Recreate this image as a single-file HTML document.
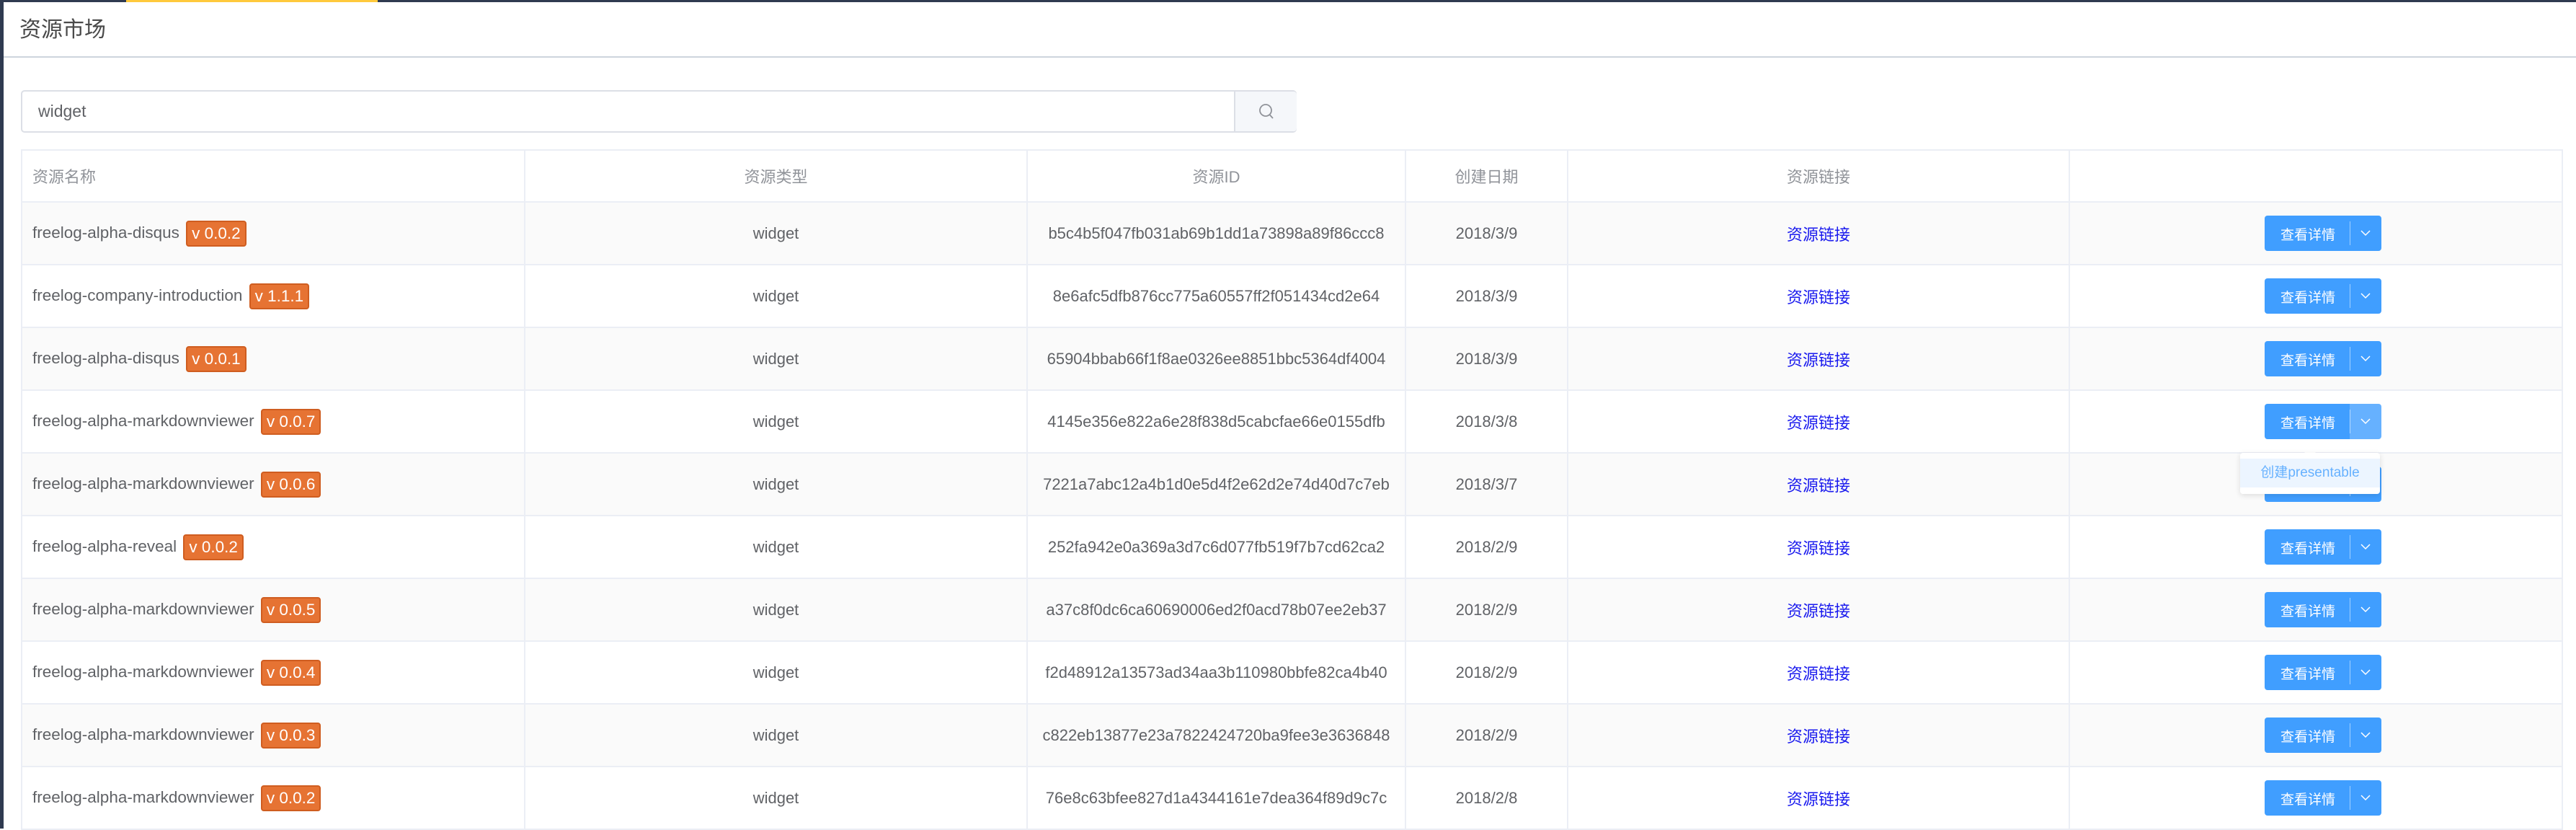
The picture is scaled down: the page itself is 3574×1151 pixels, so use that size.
<!DOCTYPE html>
<html><head><meta charset="utf-8"><style>
*{box-sizing:border-box;margin:0;padding:0}
body{width:3574px;height:1149px;overflow:hidden;background:#fff;font-family:"Liberation Sans","Noto Sans CJK SC",sans-serif;position:relative}
.left{position:absolute;left:0;top:0;width:5px;height:1149px;background:#2f3a50}
.top{position:absolute;left:0;top:0;width:3574px;height:3px;background:#2f3a50}
.yel{position:absolute;left:175px;top:0;width:349px;height:3px;background:#ffc93c}
.title{position:absolute;left:27px;top:22px;font-size:30px;color:#4a4a4a;line-height:40px}
.hline{position:absolute;left:5px;top:78px;width:3569px;height:2px;background:#cdd5dd}
.search{position:absolute;left:29px;top:125px;width:1770px;height:59px;border:2px solid #dcdfe6;border-radius:5px}
.search .txt{position:absolute;left:22px;top:14px;font-size:23px;color:#606266}
.search .btn{position:absolute;left:1681px;top:0;width:87px;height:55px;background:#f5f7fa;border-left:2px solid #dcdfe6;border-radius:0 4px 4px 0}
table{position:absolute;left:29px;top:207px;width:3527px;border-collapse:collapse;table-layout:fixed}
td,th{border:2px solid #ebeef5;font-size:22px;color:#606266;font-weight:normal;text-align:center;height:87px;white-space:nowrap}
th{height:72px;color:#909399}
td.n,th.n{text-align:left;padding-left:14px}
td.n{font-size:22.5px}
tr:nth-child(even) td{background:#fafafa}
.b{display:inline-block;background:#e67333;border:2px solid #cf5d20;color:#fff;border-radius:4px;padding:0 6px;height:36px;line-height:32px;margin-left:3px;vertical-align:middle}
a{color:#1a1aee;text-decoration:none}
.bt{display:inline-block;position:relative;left:10px;width:162px;height:49px;background:#409eff;border-radius:4px;vertical-align:middle;color:#fff;font-size:19px;text-align:left}
.bt span{position:absolute;left:22px;top:12px}
.bt i{position:absolute;left:118px;top:8px;width:1px;height:33px;background:rgba(255,255,255,.5)}
.bt svg{position:absolute;left:133px;top:19px}
.dd{position:absolute;left:3108px;top:628px;width:194px;height:57px;background:#fff;border-radius:4px;box-shadow:0 2px 8px rgba(0,0,0,.12)}
.dd div{position:absolute;left:0;top:8px;width:194px;height:40px;background:#ecf5ff;color:#66b1ff;font-size:19px;line-height:40px;text-align:center}
.arr{position:absolute;left:3197px;top:620px;width:0;height:0;border-left:8px solid transparent;border-right:8px solid transparent;border-bottom:8px solid #fff}
</style></head><body>
<div class="left"></div><div class="top"></div><div class="yel"></div>
<div class="title">资源市场</div>
<div class="hline"></div>
<div class="search"><span class="txt">widget</span><div class="btn"><svg width="87" height="55" viewBox="0 0 87 55"><circle cx="42" cy="26" r="8" fill="none" stroke="#909399" stroke-width="1.8"/><line x1="47.5" y1="32" x2="52" y2="37" stroke="#909399" stroke-width="1.8"/></svg></div></div>
<table>
<colgroup><col style="width:698px"><col style="width:697px"><col style="width:525px"><col style="width:225px"><col style="width:696px"><col></colgroup>
<tr><th class="n">资源名称</th><th>资源类型</th><th>资源ID</th><th>创建日期</th><th>资源链接</th><th></th></tr>
<tr><td class="n">freelog-alpha-disqus <span class="b">v 0.0.2</span></td><td>widget</td><td>b5c4b5f047fb031ab69b1dd1a73898a89f86ccc8</td><td>2018/3/9</td><td><a>资源链接</a></td><td><span class="bt"><span>查看详情</span><i></i><svg width="14" height="10"><path d="M1 2L7 8L13 2" fill="none" stroke="#fff" stroke-width="1.5"/></svg></span></td></tr>
<tr><td class="n">freelog-company-introduction <span class="b">v 1.1.1</span></td><td>widget</td><td>8e6afc5dfb876cc775a60557ff2f051434cd2e64</td><td>2018/3/9</td><td><a>资源链接</a></td><td><span class="bt"><span>查看详情</span><i></i><svg width="14" height="10"><path d="M1 2L7 8L13 2" fill="none" stroke="#fff" stroke-width="1.5"/></svg></span></td></tr>
<tr><td class="n">freelog-alpha-disqus <span class="b">v 0.0.1</span></td><td>widget</td><td>65904bbab66f1f8ae0326ee8851bbc5364df4004</td><td>2018/3/9</td><td><a>资源链接</a></td><td><span class="bt"><span>查看详情</span><i></i><svg width="14" height="10"><path d="M1 2L7 8L13 2" fill="none" stroke="#fff" stroke-width="1.5"/></svg></span></td></tr>
<tr><td class="n">freelog-alpha-markdownviewer <span class="b">v 0.0.7</span></td><td>widget</td><td>4145e356e822a6e28f838d5cabcfae66e0155dfb</td><td>2018/3/8</td><td><a>资源链接</a></td><td><span class="bt" style="background:linear-gradient(90deg,#409eff 118px,#66b1ff 118px)"><span>查看详情</span><i></i><svg width="14" height="10"><path d="M1 2L7 8L13 2" fill="none" stroke="#fff" stroke-width="1.5"/></svg></span></td></tr>
<tr><td class="n">freelog-alpha-markdownviewer <span class="b">v 0.0.6</span></td><td>widget</td><td>7221a7abc12a4b1d0e5d4f2e62d2e74d40d7c7eb</td><td>2018/3/7</td><td><a>资源链接</a></td><td><span class="bt"><span>查看详情</span><i></i><svg width="14" height="10"><path d="M1 2L7 8L13 2" fill="none" stroke="#fff" stroke-width="1.5"/></svg></span></td></tr>
<tr><td class="n">freelog-alpha-reveal <span class="b">v 0.0.2</span></td><td>widget</td><td>252fa942e0a369a3d7c6d077fb519f7b7cd62ca2</td><td>2018/2/9</td><td><a>资源链接</a></td><td><span class="bt"><span>查看详情</span><i></i><svg width="14" height="10"><path d="M1 2L7 8L13 2" fill="none" stroke="#fff" stroke-width="1.5"/></svg></span></td></tr>
<tr><td class="n">freelog-alpha-markdownviewer <span class="b">v 0.0.5</span></td><td>widget</td><td>a37c8f0dc6ca60690006ed2f0acd78b07ee2eb37</td><td>2018/2/9</td><td><a>资源链接</a></td><td><span class="bt"><span>查看详情</span><i></i><svg width="14" height="10"><path d="M1 2L7 8L13 2" fill="none" stroke="#fff" stroke-width="1.5"/></svg></span></td></tr>
<tr><td class="n">freelog-alpha-markdownviewer <span class="b">v 0.0.4</span></td><td>widget</td><td>f2d48912a13573ad34aa3b110980bbfe82ca4b40</td><td>2018/2/9</td><td><a>资源链接</a></td><td><span class="bt"><span>查看详情</span><i></i><svg width="14" height="10"><path d="M1 2L7 8L13 2" fill="none" stroke="#fff" stroke-width="1.5"/></svg></span></td></tr>
<tr><td class="n">freelog-alpha-markdownviewer <span class="b">v 0.0.3</span></td><td>widget</td><td>c822eb13877e23a7822424720ba9fee3e3636848</td><td>2018/2/9</td><td><a>资源链接</a></td><td><span class="bt"><span>查看详情</span><i></i><svg width="14" height="10"><path d="M1 2L7 8L13 2" fill="none" stroke="#fff" stroke-width="1.5"/></svg></span></td></tr>
<tr><td class="n">freelog-alpha-markdownviewer <span class="b">v 0.0.2</span></td><td>widget</td><td>76e8c63bfee827d1a4344161e7dea364f89d9c7c</td><td>2018/2/8</td><td><a>资源链接</a></td><td><span class="bt"><span>查看详情</span><i></i><svg width="14" height="10"><path d="M1 2L7 8L13 2" fill="none" stroke="#fff" stroke-width="1.5"/></svg></span></td></tr>
</table>
<div class="arr"></div>
<div class="dd"><div>创建presentable</div></div>
</body></html>
